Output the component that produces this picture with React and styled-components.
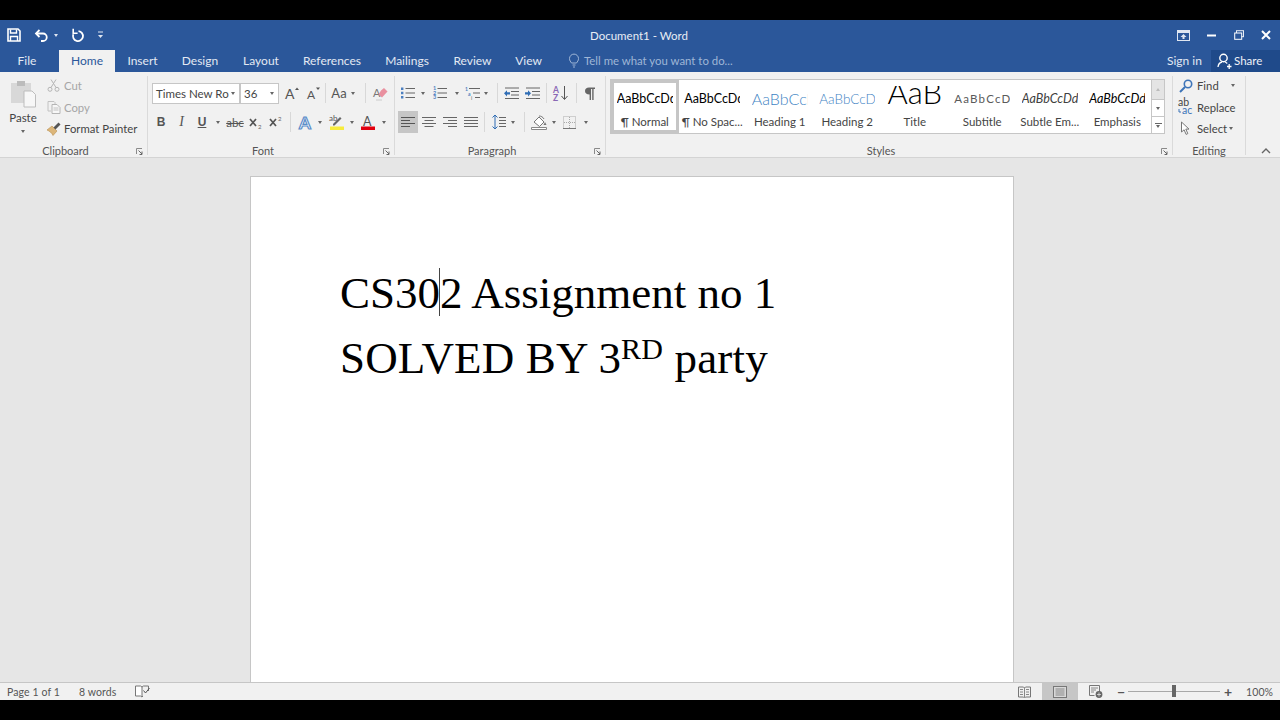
import React from 'react'
import styled, { createGlobalStyle } from 'styled-components'

const GlobalStyle = createGlobalStyle`
  html, body { margin: 0; padding: 0; background: #000; }
  * { box-sizing: border-box; }
  svg { overflow: visible; }
`

const UI = `Lato, "Open Sans", sans-serif`

const Screen = styled.div`
  width: 1280px;
  height: 720px;
  padding: 20px 0;
  display: flex;
  flex-direction: column;
  background: #000;
  overflow: hidden;
  font-family: ${UI};
`

const TitleBar = styled.div`
  height: 30px;
  flex: none;
  display: grid;
  grid-template-columns: 1fr auto 1fr;
  align-items: center;
  background: #2b579a;
  color: #f2f5fa;
`

const Qat = styled.div`
  display: flex;
  align-items: center;
  padding-left: 6px;
`

const QatButton = styled.div`
  width: ${p => p.$w}px;
  height: 22px;
  flex: none;
  display: flex;
  align-items: center;
  justify-content: center;
  margin-left: ${p => p.$l || 0}px;
`

const DocTitle = styled.div`
  font-size: 11.5px;
  padding-right: 2px;
  color: #e8edf5;
`

const WindowButtons = styled.div`
  display: flex;
  justify-content: flex-end;
  align-items: center;
`

const WindowButton = styled.div`
  width: 27.5px;
  height: 22px;
  display: flex;
  align-items: center;
  justify-content: center;
`

const TabBar = styled.div`
  height: 22px;
  flex: none;
  display: flex;
  align-items: stretch;
  background: #2b579a;
`

const Tab = styled.div`
  width: ${p => p.$w}px;
  flex: none;
  display: flex;
  align-items: center;
  justify-content: center;
  padding: 0 ${p => p.$pr || 0}px 1px 0;
  font-size: 12px;
  color: ${p => (p.$active ? '#2b579a' : '#e3e9f3')};
  background: ${p => (p.$active ? '#f1f1f1' : 'transparent')};
`

const TellMe = styled.div`
  display: flex;
  align-items: center;
  gap: 4px;
  margin-left: 14px;
  padding-bottom: 1px;
  font-size: 11.4px;
  color: #9fb6d6;
`

const Account = styled.div`
  margin-left: auto;
  display: flex;
  align-items: stretch;
`

const SignIn = styled.div`
  width: 44px;
  display: flex;
  align-items: center;
  padding-bottom: 1px;
  font-size: 12px;
  color: #e3e9f3;
`

const Share = styled.div`
  width: 69px;
  display: flex;
  align-items: center;
  gap: 2px;
  padding: 0 0 1px 6px;
  font-size: 11.5px;
  color: #eef2f8;
  background: #1f4a8a;
`

const Ribbon = styled.div`
  height: 86px;
  flex: none;
  display: flex;
  align-items: flex-start;
  padding-top: 4px;
  background: #f1f1f1;
  border-bottom: 1px solid #d4d4d4;
  color: #444;
`

const Group = styled.div`
  width: ${p => p.$w}px;
  height: 79px;
  flex: none;
  display: flex;
  flex-direction: column;
  padding-top: 6px;
  border-right: 1px solid #dadada;
`

const GroupBody = styled.div`
  flex: 1;
  min-height: 0;
  display: ${p => (p.$row ? 'flex' : 'block')};
`

const Footer = styled.div`
  height: 11px;
  flex: none;
  display: flex;
  font-size: 11px;
  line-height: 14px;
  color: #555;
`

const FooterLabel = styled.div`
  flex: 1;
  text-align: center;
`

const Launcher = styled.div`
  width: 16px;
  flex: none;
  padding: 4px 4px 0 5px;
  line-height: 0;
`

const Row = styled.div`
  height: 22px;
  display: flex;
  align-items: center;
  padding-left: ${p => p.$pad || 0}px;
  & + & { margin-top: 7px; }
`

const Tool = styled.div`
  width: ${p => p.$w}px;
  height: 22px;
  flex: none;
  display: flex;
  align-items: center;
  justify-content: center;
  gap: ${p => p.$gap || 0}px;
  margin-left: ${p => p.$l || 0}px;
  background: ${p => (p.$on ? '#c6c6c6' : 'transparent')};
  font-size: 12px;
  color: #555;
`

const LetterTool = styled(Tool)`
  font-family: ${p => (p.$serif ? '"Liberation Serif", serif' : '"Liberation Sans", sans-serif')};
  font-weight: ${p => (p.$serif ? 400 : 700)};
  font-style: ${p => (p.$serif ? 'italic' : 'normal')};
  font-size: ${p => (p.$serif ? 14 : 12)}px;
  text-decoration: ${p => (p.$under ? 'underline' : 'none')};
`

const StrikeTool = styled(Tool)`
  font-size: 11.5px;
  text-decoration: line-through;
`

const CaseTool = styled(Tool)`
  font-size: 13px;
`

const Tri = styled.span`
  display: block;
  width: 0;
  height: 0;
  flex: none;
  margin-left: ${p => p.$l || 0}px;
  border-left: 2.5px solid transparent;
  border-right: 2.5px solid transparent;
  border-top: 3px solid ${p => p.$color || '#666'};
  transform: ${p => (p.$up ? 'rotate(180deg)' : 'none')};
`

const Sep = styled.span`
  width: 1px;
  height: 20px;
  flex: none;
  margin-left: ${p => p.$l}px;
  margin-right: ${p => p.$r}px;
  background: #d8d8d8;
`

const PasteColumn = styled.div`
  width: 46px;
  flex: none;
  display: flex;
  flex-direction: column;
  align-items: center;
  margin-top: -3px;
  font-size: 11.5px;
`

const PasteLabel = styled.div`
  margin-top: 2px;
  line-height: 15px;
  color: #444;
`

const PasteCaret = styled.div`
  margin-top: 5px;
`

const SmallColumn = styled.div`
  margin-top: -7px;
  display: flex;
  flex-direction: column;
`

const SmallAction = styled.div`
  height: 21.5px;
  display: flex;
  align-items: center;
  font-size: 11.3px;
  color: ${p => (p.$off ? '#a6a6a6' : '#444')};
`

const ActionIcon = styled.div`
  width: ${p => p.$w}px;
  flex: none;
  display: flex;
  justify-content: center;
  margin-left: ${p => p.$l || 0}px;
  margin-right: ${p => p.$gap || 0}px;
`

const FontSelect = styled.div`
  width: ${p => p.$w}px;
  height: 21px;
  flex: none;
  display: flex;
  align-items: center;
  justify-content: space-between;
  padding: 0 4px 0 3px;
  background: #fff;
  border: 1px solid #c6c6c6;
  font-size: 11.5px;
  color: #444;
  white-space: nowrap;
`

const Gallery = styled.div`
  width: 555px;
  height: 55px;
  margin: -3px 0 0 4px;
  display: flex;
  background: #fff;
  border: 1px solid #c6c6c6;
`

const StyleItems = styled.div`
  flex: 1;
  display: flex;
`

const StyleItem = styled.div`
  width: 67.5px;
  flex: none;
  display: flex;
  flex-direction: column;
  align-items: center;
  border: 3px solid ${p => (p.$selected ? '#c6c6c6' : 'transparent')};
`

const StylePreview = styled.div`
  width: 56px;
  height: ${p => (p.$big ? 28 : 31)}px;
  margin-top: ${p => (p.$big ? 3 : 0)}px;
  flex: none;
  overflow: hidden;
  display: flex;
  align-items: ${p => (p.$big ? 'flex-start' : 'center')};
  justify-content: ${p => (p.$big ? 'center' : 'flex-start')};
  line-height: ${p => (p.$big ? '13px' : 'normal')};
  white-space: nowrap;
  font-family: Lato, sans-serif;
  font-size: ${p => p.$size}px;
  font-weight: ${p => p.$weight || 400};
  font-style: ${p => (p.$italic ? 'italic' : 'normal')};
  letter-spacing: ${p => p.$spacing || 0}px;
  color: ${p => p.$color || '#000'};
`

const StyleName = styled.div`
  font-size: 11.5px;
  line-height: 16px;
  white-space: nowrap;
  color: #444;
`

const GalleryScroll = styled.div`
  width: 13px;
  flex: none;
  display: flex;
  flex-direction: column;
  border-left: 1px solid #c6c6c6;
`

const ScrollButton = styled.div`
  height: ${p => p.$h}px;
  display: flex;
  flex-direction: column;
  gap: 1px;
  align-items: center;
  justify-content: center;
  background: ${p => (p.$off ? '#e4e4e4' : '#fff')};
  border-bottom: ${p => (p.$last ? 0 : 1)}px solid #c6c6c6;
`

const ScrollDash = styled.span`
  width: 7px;
  height: 1px;
  background: #666;
`

const EditColumn = styled.div`
  margin-top: -7px;
  padding-left: 5px;
  display: flex;
  flex-direction: column;
`

const Collapse = styled.div`
  flex: 1;
  height: 79px;
  display: flex;
  align-items: flex-end;
  justify-content: center;
  padding: 0 0 1px 6px;
`

const Workspace = styled.div`
  flex: 1;
  min-height: 0;
  overflow: hidden;
  display: flex;
  padding: 18px 0 0 250px;
  background: #e6e6e6;
`

const Sheet = styled.div`
  width: 764px;
  height: 700px;
  flex: none;
  padding: 84px 0 0 89px;
  background: #fff;
  border: 1px solid #c6c6c6;
  font-family: "Liberation Serif", "Times New Roman", serif;
  font-size: 45px;
  line-height: 65px;
  color: #000;
`

const Line = styled.div`
  white-space: nowrap;
  letter-spacing: ${p => p.$spacing || 0}px;
`

const TextCaret = styled.span`
  display: inline-block;
  position: relative;
  width: 0;
  height: 0;
  &::after {
    content: '';
    position: absolute;
    left: -1px;
    top: -40px;
    width: 1px;
    height: 48px;
    background: #444;
  }
`

const Sup = styled.sup`
  font-size: 30px;
  line-height: 0;
  vertical-align: 14px;
`

const StatusBar = styled.div`
  height: 18px;
  flex: none;
  display: flex;
  align-items: center;
  background: #f1f1f1;
  border-top: 1px solid #c6c6c6;
  color: #555;
  font-size: 10.5px;
  letter-spacing: 0.1px;
`

const StatusText = styled.div`
  margin-left: ${p => p.$l}px;
`

const StatusRight = styled.div`
  margin-left: auto;
  display: flex;
  align-items: center;
  height: 100%;
`

const ViewButton = styled.div`
  width: ${p => p.$w}px;
  height: 100%;
  display: flex;
  align-items: center;
  justify-content: center;
  background: ${p => (p.$on ? '#c6c6c6' : 'transparent')};
`

const ZoomSlider = styled.div`
  position: relative;
  width: 92px;
  height: 1px;
  background: #a8a8a8;
`

const ZoomThumb = styled.span`
  position: absolute;
  left: 44px;
  top: -6px;
  width: 4px;
  height: 12px;
  background: #666;
`

const ZoomSign = styled.div`
  width: 14px;
  margin-left: ${p => p.$l || 0}px;
  text-align: center;
  font-size: 14px;
  font-weight: 700;
  line-height: 14px;
  color: #555;
`

const ZoomValue = styled.div`
  width: 45px;
  padding-left: 11px;
`

const EffectLetter = styled.span`
  color: #fff;
  font-size: 17px;
  line-height: 17px;
  font-weight: 700;
  -webkit-text-stroke: 1.2px #5b8dc9;
`

const Svg = ({ w = 16, h = 16, children, ...rest }) => (
  <svg width={w} height={h} viewBox={`0 0 ${w} ${h}`} fill="none" {...rest}>{children}</svg>
)

const SaveIcon = () => (
  <Svg w={14} h={14}>
    <path d="M1 1h10l2 2v10H1z" stroke="#fff" strokeWidth="1.6" />
    <path d="M3.5 1.5v3.5h6V1.5M3.5 13V8.5h7V13" stroke="#fff" strokeWidth="1.4" />
  </Svg>
)
const UndoIcon = () => (
  <Svg w={13} h={13}>
    <path d="M4.5 1L1 4.5 4.5 8" stroke="#fff" strokeWidth="1.8" />
    <path d="M1.5 4.5h6.5a3.7 3.7 0 0 1 0 7.5H6" stroke="#fff" strokeWidth="1.8" />
  </Svg>
)
const RedoIcon = () => (
  <Svg w={14} h={14}>
    <path d="M7.5 3.1A5 5 0 1 1 2.3 6.3" stroke="#fff" strokeWidth="1.8" />
    <path d="M2.2.8v4.4h4.4" stroke="#fff" strokeWidth="1.6" />
  </Svg>
)
const CustomizeIcon = () => (
  <Svg w={7} h={8}>
    <path d="M1 1h5" stroke="#dfe6f1" />
    <path d="M1 4h5L3.5 7z" fill="#dfe6f1" />
  </Svg>
)
const RibbonModeIcon = () => (
  <Svg w={13} h={11}>
    <rect x=".5" y=".5" width="12" height="10" stroke="#dfe6f1" />
    <path d="M1 1h11v2H1z" fill="#dfe6f1" />
    <path d="M6.5 4l3 3H7.5v2h-2V7h-2z" fill="#dfe6f1" />
  </Svg>
)
const MinimizeIcon = () => <Svg w={9} h={3}><path d="M0 1.5h9" stroke="#fff" strokeWidth="2" /></Svg>
const RestoreIcon = () => (
  <Svg w={10} h={10}>
    <rect x="2.5" y=".7" width="7" height="6" stroke="#e8edf5" />
    <rect x=".7" y="3" width="7" height="6.3" fill="#2b579a" stroke="#fff" />
  </Svg>
)
const CloseIcon = () => <Svg w={10} h={10}><path d="M1 1l8 8M9 1l-8 8" stroke="#fff" strokeWidth="2" /></Svg>
const BulbIcon = () => (
  <Svg w={12} h={15}>
    <path d="M3.5 10C2.6 8.6 1.5 7.6 1.5 5.6a4.5 4.5 0 0 1 9 0c0 2-1.1 3-2 4.4z" stroke="#9fb6d6" />
    <path d="M4.5 12h3M5 14h2" stroke="#9fb6d6" />
  </Svg>
)
const PersonIcon = () => (
  <Svg w={15} h={15}>
    <circle cx="6.5" cy="5" r="3.7" stroke="#fff" strokeWidth="1.4" />
    <path d="M1 14c.3-2.8 2-4.6 4-5M8 9c1 .3 1.7.8 2.2 1.5M10 13.5h4.5M12.2 11v5" stroke="#fff" strokeWidth="1.3" />
  </Svg>
)
const LauncherIcon = () => (
  <Svg w={7} h={7}>
    <path d="M.5 6V.5H6" stroke="#8a8a8a" />
    <path d="M2.5 2.5L6 6M6 3.5V6.5H3.5" stroke="#666" />
  </Svg>
)
const PasteIcon = () => (
  <Svg w={28} h={29}>
    <path d="M2 4h20v20H2z" fill="#d8d8d8" />
    <path d="M8 2h8v5H8z" fill="#bcbcbc" />
    <path d="M15 12h8l3.5 3.5V28H15z" fill="#f7f7f7" stroke="#bdbdbd" />
  </Svg>
)
const ScissorsIcon = () => (
  <Svg w={13} h={13}>
    <circle cx="3" cy="10.3" r="2" stroke="#b5b5b5" />
    <circle cx="10" cy="10.3" r="2" stroke="#b5b5b5" />
    <path d="M4 8.5L9 .5M9 8.5L4 .5" stroke="#b5b5b5" />
  </Svg>
)
const CopyIcon = () => (
  <Svg w={14} h={13}>
    <path d="M1 .5h6l1 1V3M1 .5V10h3" stroke="#c2c2c2" />
    <path d="M5 3.5h5l3 3v6H5z" fill="#f7f7f7" stroke="#b5b5b5" />
    <path d="M6.5 7h5M6.5 9h5" stroke="#c2c2c2" />
  </Svg>
)
const PainterIcon = () => (
  <Svg w={15} h={14}>
    <path d="M1 8l5-4 5 5-4 4.5C6 11 3.5 9 1 8z" fill="#dcb67a" stroke="#b98f4f" strokeWidth=".6" />
    <path d="M7.5 5.5l5-5 2 2-5 5z" fill="#555" />
  </Svg>
)
const GrowA = ({ up }) => (
  <Svg w={14} h={14}>
    <text x={up ? 0 : 1} y="13" fontSize={up ? 14 : 12} fontFamily={UI} fill="#555">A</text>
    <path d={up ? 'M10 4l2-2.5L14 4z' : 'M10 1.5h4L12 4z'} fill="#555" />
  </Svg>
)
const EraserIcon = () => (
  <Svg w={15} h={15}>
    <text x="0" y="11" fontSize="11" fontFamily={UI} fill="#777">A</text>
    <path d="M8 4.5l3-2.5 3.5 3.5-5.5 6-3.5-3z" fill="#e9909f" />
    <path d="M3 14h6" stroke="#ccc" />
  </Svg>
)
const HighlightIcon = () => (
  <Svg w={16} h={16}>
    <text x="0" y="7" fontSize="8" fontFamily={UI} fill="#555">ab</text>
    <path d="M4 10l7-7 1.5 1.5-7 7H4z" fill="#666" />
    <path d="M1 12.5h14V16H1z" fill="#f7ec3c" />
  </Svg>
)
const FontColorIcon = () => (
  <Svg w={16} h={16}>
    <text x="3" y="11.5" fontSize="12.5" fontFamily={UI} fill="#555">A</text>
    <path d="M1 12.5h14V16H1z" fill="#e2000f" />
  </Svg>
)
const SubIcon = ({ sup }) => (
  <Svg w={14} h={14}>
    <path d="M1 4l6 7M7 4l-6 7" stroke="#555" strokeWidth="1.7" />
    <text x="9" y={sup ? 6 : 14} fontSize="6" fontFamily={UI} fill="#666">2</text>
  </Svg>
)
const ListIcon = ({ kind }) => (
  <Svg w={14} h={14}>
    {kind === 'bullets' && <path d="M0 1.5h2.4v2.4H0zM0 5.8h2.4v2.4H0zM0 10.1h2.4v2.4H0z" fill="#4b7fc0" />}
    {kind === 'numbers' && [4, 8.5, 13].map((y, i) => (
      <text key={y} x="0" y={y} fontSize="5.5" fontFamily={UI} fontWeight="700" fill="#4b7fc0">{i + 1}</text>
    ))}
    <path d="M4.5 2.5H14M4.5 7H14M4.5 11.5H14" stroke="#666" />
  </Svg>
)
const MultiIcon = () => (
  <Svg w={15} h={14}>
    <text x="0" y="5" fontSize="5" fontFamily={UI} fontWeight="700" fill="#4b7fc0">1</text>
    <text x="3" y="9.5" fontSize="5" fontFamily={UI} fontWeight="700" fill="#4b7fc0">a</text>
    <text x="6" y="14" fontSize="5" fontFamily={UI} fill="#666">i</text>
    <path d="M4 2.5h11M8 7h7M10 11.5h5" stroke="#666" />
  </Svg>
)
const IndentIcon = ({ out }) => (
  <Svg w={15} h={13}>
    <path d="M1 1h14M7 4.5h8M7 8h8M1 11.5h14" stroke="#666" />
    <path d={out ? 'M0 6.2l3-3v2h3v2.2H3v2z' : 'M6 6.2l-3-3v2H0v2.2h3v2z'} fill="#2f6db5" />
  </Svg>
)
const SortIcon = () => (
  <Svg w={16} h={16}>
    <text x="0" y="7.5" fontSize="8.5" fontFamily={UI} fontWeight="700" fill="#8a68b5">A</text>
    <text x="0" y="15.5" fontSize="8.5" fontFamily={UI} fontWeight="700" fill="#8a68b5">Z</text>
    <path d="M11.5 1v13M8.5 11l3 3.5 3-3.5" stroke="#555" />
  </Svg>
)
const PilcrowIcon = () => (
  <Svg w={10} h={13}>
    <path d="M4 .5h6v1.6H8.6V13H7.2V2.1H6V13H4.6V7.5C1.5 7.5 0 6 0 4s1.5-3.5 4-3.5z" fill="#666" />
  </Svg>
)
const AlignIcon = ({ mode }) => {
  const rows = {
    left: 'M0 1.5h14M0 4.5h9M0 7.5h14M0 10.5h9',
    center: 'M0 1.5h14M2.5 4.5h9M0 7.5h14M2.5 10.5h9',
    right: 'M0 1.5h14M5 4.5h9M0 7.5h14M5 10.5h9',
    justify: 'M0 1.5h14M0 4.5h14M0 7.5h14M0 10.5h14',
  }
  return <Svg w={14} h={12}><path d={rows[mode]} stroke={mode === 'left' ? '#555' : '#666'} /></Svg>
}
const SpacingIcon = () => (
  <Svg w={14} h={16}>
    <path d="M3 1v14M.5 3.5L3 1l2.5 2.5M.5 12.5L3 15l2.5-2.5" stroke="#2f6db5" />
    <path d="M7 3.5h7M7 6.5h7M7 9.5h7M7 12.5h7" stroke="#666" />
  </Svg>
)
const ShadingIcon = () => (
  <Svg w={17} h={15}>
    <path d="M3 7l5-5 5 5-4.5 4.5z" fill="#fff" stroke="#777" />
    <path d="M8 1c2 0 4 1 5 3" stroke="#777" />
    <path d="M14 7l1.5 3h-3z" fill="#777" />
    <path d="M.5 12.5h15v2H.5z" fill="#fff" stroke="#888" />
  </Svg>
)
const BordersIcon = () => (
  <Svg w={13} h={13}>
    <rect x=".5" y=".5" width="12" height="12" stroke="#aaa" strokeDasharray="1 1" />
    <path d="M6.5 1v11M1 6.5h11" stroke="#aaa" strokeDasharray="1 1" />
    <path d="M0 12.5h13" stroke="#777" />
  </Svg>
)
const FindIcon = () => (
  <Svg w={14} h={14}>
    <circle cx="9" cy="5" r="3.7" stroke="#3d74b8" strokeWidth="1.6" />
    <path d="M6 8l-5 5" stroke="#3d74b8" strokeWidth="2" />
  </Svg>
)
const ReplaceIcon = () => (
  <Svg w={16} h={16}>
    <text x="0" y="7" fontSize="10.5" fontFamily={UI} fill="#444">ab</text>
    <text x="4" y="15" fontSize="10.5" fontFamily={UI} fill="#3d74b8">ac</text>
    <path d="M1 10v3h2" stroke="#3d74b8" />
  </Svg>
)
const SelectIcon = () => (
  <Svg w={12} h={15}>
    <path d="M1.5 1v10l2.6-2.2 2 4.6 1.7-.8-2-4.5H9z" fill="#fff" stroke="#777" />
  </Svg>
)
const ChevronUp = () => <Svg w={10} h={6}><path d="M1 5l4-4 4 4" stroke="#666" strokeWidth="1.4" /></Svg>
const ProofIcon = () => (
  <Svg w={15} h={13}>
    <path d="M.5 1h5l1.5 1v10L5.5 11H.5z" stroke="#777" fill="#fff" />
    <path d="M7 2l1.5-1h5v5M7 12l1-1" stroke="#777" />
    <path d="M8.5 5.5l2 2.5L14.5 3" stroke="#555" />
  </Svg>
)
const ReadIcon = () => (
  <Svg w={13} h={12}>
    <path d="M.5 1h5l1 1 1-1h5v10h-5l-1 1-1-1h-5z" stroke="#777" />
    <path d="M6.5 2v9M2 3.5h3M2 6h3M2 8.5h3M8 3.5h3M8 6h3M8 8.5h3" stroke="#888" />
  </Svg>
)
const PrintIcon = () => (
  <Svg w={14} h={12}>
    <rect x=".5" y=".5" width="13" height="11" stroke="#777" fill="#d8d8d8" />
    <path d="M2.5 3h9M2.5 5h9M2.5 7h9M2.5 9h9" stroke="#888" />
  </Svg>
)
const WebIcon = () => (
  <Svg w={14} h={13}>
    <path d="M.5.5h10v7M.5.5v10h5" stroke="#777" />
    <path d="M2 3h7M2 5h5M2 7h3" stroke="#888" />
    <circle cx="10" cy="9.5" r="3.4" fill="#666" />
    <path d="M8 9.5h4M10 7.5v4" stroke="#eee" strokeWidth=".7" />
  </Svg>
)

const STYLES = [
  { name: '¶ Normal', size: 12.5, selected: true },
  { name: '¶ No Spac...', size: 12.5 },
  { name: 'Heading 1', size: 16, color: '#3f84c4', weight: 300 },
  { name: 'Heading 2', size: 13.5, color: '#3f84c4', weight: 300 },
  { name: 'Title', size: 31, weight: 300, text: 'AaB', big: true },
  { name: 'Subtitle', size: 11.5, color: '#5a5a5a', spacing: 1.2 },
  { name: 'Subtle Em...', size: 12.5, color: '#404040', italic: true },
  { name: 'Emphasis', size: 12.5, italic: true },
]

function App() {
  return (
    <>
      <GlobalStyle />
      <Screen>
        <TitleBar>
          <Qat>
            <QatButton $w={16}><SaveIcon /></QatButton>
            <QatButton $w={26} $l={6}><UndoIcon /></QatButton>
            <QatButton $w={4}><Tri $color="#dfe6f1" /></QatButton>
            <QatButton $w={24} $l={8}><RedoIcon /></QatButton>
            <QatButton $w={20}><CustomizeIcon /></QatButton>
          </Qat>
          <DocTitle>Document1 - Word</DocTitle>
          <WindowButtons>
            <WindowButton><RibbonModeIcon /></WindowButton>
            <WindowButton><MinimizeIcon /></WindowButton>
            <WindowButton><RestoreIcon /></WindowButton>
            <WindowButton><CloseIcon /></WindowButton>
          </WindowButtons>
        </TitleBar>

        <TabBar>
          <Tab $w={59} $pr={5}>File</Tab>
          <Tab $w={56} $active>Home</Tab>
          <Tab $w={55}>Insert</Tab>
          <Tab $w={60}>Design</Tab>
          <Tab $w={62}>Layout</Tab>
          <Tab $w={80}>References</Tab>
          <Tab $w={70}>Mailings</Tab>
          <Tab $w={61}>Review</Tab>
          <Tab $w={51}>View</Tab>
          <TellMe><BulbIcon />Tell me what you want to do...</TellMe>
          <Account>
            <SignIn>Sign in</SignIn>
            <Share><PersonIcon />Share</Share>
          </Account>
        </TabBar>

        <Ribbon>
          <Group $w={148}>
            <GroupBody $row>
              <PasteColumn>
                <PasteIcon />
                <PasteLabel>Paste</PasteLabel>
                <PasteCaret><Tri /></PasteCaret>
              </PasteColumn>
              <SmallColumn>
                <SmallAction $off><ActionIcon $w={15} $gap={3}><ScissorsIcon /></ActionIcon>Cut</SmallAction>
                <SmallAction $off><ActionIcon $w={15} $gap={3}><CopyIcon /></ActionIcon>Copy</SmallAction>
                <SmallAction><ActionIcon $w={15} $gap={3}><PainterIcon /></ActionIcon>Format Painter</SmallAction>
              </SmallColumn>
            </GroupBody>
            <Footer>
              <FooterLabel>Clipboard</FooterLabel>
              <Launcher><LauncherIcon /></Launcher>
            </Footer>
          </Group>

          <Group $w={247}>
            <GroupBody>
              <Row $pad={4}>
                <FontSelect $w={88}>Times New Ro<Tri /></FontSelect>
                <FontSelect $w={39}>36<Tri /></FontSelect>
                <Tool $w={21} $l={2}><GrowA up /></Tool>
                <Tool $w={21}><GrowA /></Tool>
                <Sep $l={2} $r={0} />
                <CaseTool $w={34} $gap={4}>Aa<Tri /></CaseTool>
                <Sep $l={5} $r={4} />
                <Tool $w={20}><EraserIcon /></Tool>
              </Row>
              <Row $pad={3}>
                <LetterTool $w={20}>B</LetterTool>
                <LetterTool $w={21} $serif>I</LetterTool>
                <LetterTool $w={20} $under>U</LetterTool>
                <Tool $w={12}><Tri /></Tool>
                <StrikeTool $w={22}>abc</StrikeTool>
                <Tool $w={20}><SubIcon /></Tool>
                <Tool $w={20}><SubIcon sup /></Tool>
                <Sep $l={4} $r={3} />
                <Tool $w={22}><EffectLetter>A</EffectLetter></Tool>
                <Tool $w={8}><Tri /></Tool>
                <Tool $w={26}><HighlightIcon /></Tool>
                <Tool $w={4}><Tri /></Tool>
                <Tool $w={28}><FontColorIcon /></Tool>
                <Tool $w={4}><Tri /></Tool>
              </Row>
            </GroupBody>
            <Footer>
              <FooterLabel>Font</FooterLabel>
              <Launcher><LauncherIcon /></Launcher>
            </Footer>
          </Group>

          <Group $w={211}>
            <GroupBody>
              <Row $pad={2}>
                <Tool $w={22}><ListIcon kind="bullets" /></Tool>
                <Tool $w={8}><Tri /></Tool>
                <Tool $w={26}><ListIcon kind="numbers" /></Tool>
                <Tool $w={7}><Tri /></Tool>
                <Tool $w={24}><MultiIcon /></Tool>
                <Tool $w={4}><Tri /></Tool>
                <Sep $l={9} $r={2} />
                <Tool $w={22}><IndentIcon out /></Tool>
                <Tool $w={20}><IndentIcon /></Tool>
                <Sep $l={4} $r={2} />
                <Tool $w={24}><SortIcon /></Tool>
                <Sep $l={3} $r={2} />
                <Tool $w={22}><PilcrowIcon /></Tool>
              </Row>
              <Row $pad={3}>
                <Tool $w={20} $on><AlignIcon mode="left" /></Tool>
                <Tool $w={21}><AlignIcon mode="center" /></Tool>
                <Tool $w={21}><AlignIcon mode="right" /></Tool>
                <Tool $w={21}><AlignIcon mode="justify" /></Tool>
                <Sep $l={3} $r={2} />
                <Tool $w={24}><SpacingIcon /></Tool>
                <Tool $w={4}><Tri /></Tool>
                <Sep $l={9} $r={2} />
                <Tool $w={24}><ShadingIcon /></Tool>
                <Tool $w={6}><Tri /></Tool>
                <Tool $w={25}><BordersIcon /></Tool>
                <Tool $w={8}><Tri /></Tool>
              </Row>
            </GroupBody>
            <Footer>
              <FooterLabel>Paragraph</FooterLabel>
              <Launcher><LauncherIcon /></Launcher>
            </Footer>
          </Group>

          <Group $w={567}>
            <GroupBody>
              <Gallery>
                <StyleItems>
                  {STYLES.map(s => (
                    <StyleItem key={s.name} $selected={s.selected}>
                      <StylePreview $size={s.size} $color={s.color} $weight={s.weight} $italic={s.italic} $spacing={s.spacing} $big={s.big}>
                        {s.text || 'AaBbCcDdEe'}
                      </StylePreview>
                      <StyleName>{s.name}</StyleName>
                    </StyleItem>
                  ))}
                </StyleItems>
                <GalleryScroll>
                  <ScrollButton $h={20} $off><Tri $up $color="#bbb" /></ScrollButton>
                  <ScrollButton $h={17}><Tri /></ScrollButton>
                  <ScrollButton $h={16} $last><ScrollDash /><Tri /></ScrollButton>
                </GalleryScroll>
              </Gallery>
            </GroupBody>
            <Footer>
              <FooterLabel>Styles</FooterLabel>
              <Launcher><LauncherIcon /></Launcher>
            </Footer>
          </Group>

          <Group $w={73}>
            <GroupBody>
              <EditColumn>
                <SmallAction><ActionIcon $w={16} $gap={3}><FindIcon /></ActionIcon>Find<Tri $l={12} /></SmallAction>
                <SmallAction><ActionIcon $w={16} $gap={3}><ReplaceIcon /></ActionIcon>Replace</SmallAction>
                <SmallAction><ActionIcon $w={16} $gap={3}><SelectIcon /></ActionIcon>Select<Tri $l={2} /></SmallAction>
              </EditColumn>
            </GroupBody>
            <Footer>
              <FooterLabel>Editing</FooterLabel>
            </Footer>
          </Group>

          <Collapse><ChevronUp /></Collapse>
        </Ribbon>

        <Workspace>
          <Sheet>
            <Line>CS30<TextCaret />2 Assignment no 1</Line>
            <Line $spacing={0.17}>SOLVED BY 3<Sup>RD</Sup> party</Line>
          </Sheet>
        </Workspace>

        <StatusBar>
          <StatusText $l={7}>Page 1 of 1</StatusText>
          <StatusText $l={19}>8 words</StatusText>
          <ActionIcon $w={15} $l={19}><ProofIcon /></ActionIcon>
          <StatusRight>
            <ViewButton $w={36}><ReadIcon /></ViewButton>
            <ViewButton $w={36} $on><PrintIcon /></ViewButton>
            <ViewButton $w={36}><WebIcon /></ViewButton>
            <ZoomSign>−</ZoomSign>
            <ZoomSlider><ZoomThumb /></ZoomSlider>
            <ZoomSign $l={1}>+</ZoomSign>
            <ZoomValue>100%</ZoomValue>
          </StatusRight>
        </StatusBar>
      </Screen>
    </>
  )
}

export default App
